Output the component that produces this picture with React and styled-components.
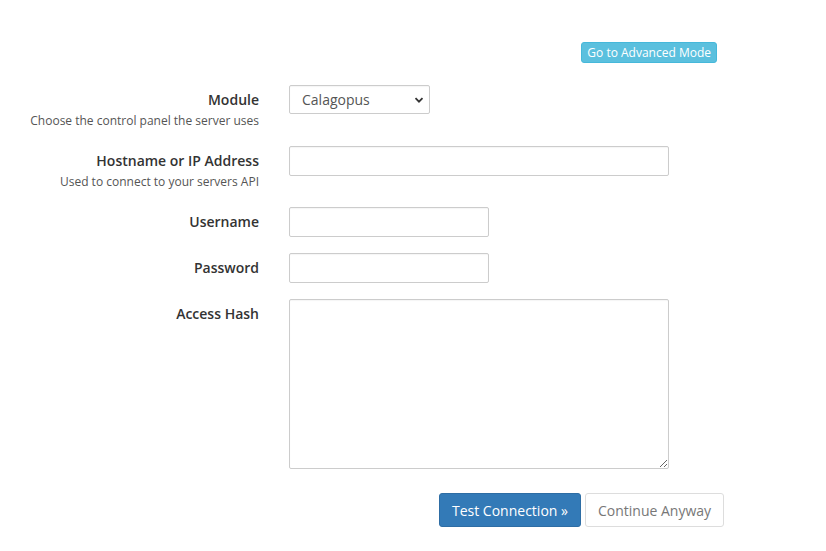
import React from "react";
import styled, { createGlobalStyle } from "styled-components";

const GlobalStyle = createGlobalStyle`
  html, body { margin: 0; padding: 0; background: #fff; }
  body {
    font-family: "Open Sans", "Liberation Sans", Arial, sans-serif;
    color: #333;
    font-size: 14px;
  }
  * { box-sizing: border-box; }
`;

const Page = styled.div`
  width: 826px;
  min-height: 551px;
  padding-top: 42px;
`;

const TopBar = styled.div`
  display: flex;
  justify-content: flex-end;
  padding-right: 109px;
`;

const InfoButton = styled.button`
  font-family: inherit;
  font-size: 12px;
  line-height: 18px;
  height: 21px;
  padding: 0 5px;
  color: #fff;
  background: #5bc0de;
  border: 1px solid #46b8da;
  border-radius: 3px;
  cursor: pointer;
`;

const Form = styled.form`
  display: flex;
  flex-direction: column;
  gap: 16px;
  margin-top: 22px;
`;

const Row = styled.div`
  display: grid;
  grid-template-columns: 259px 1fr;
  column-gap: 30px;
  align-items: start;
`;

const LabelCell = styled.div`
  text-align: right;
  padding-top: ${(p) => p.$pad ?? 5}px;
`;

const Label = styled.label`
  display: block;
  font-weight: 600;
  font-size: 14px;
  line-height: 20px;
  color: #333;
`;

const Help = styled.div`
  margin-top: 2px;
  font-size: 12px;
  line-height: 18px;
  color: #555;
`;

const fieldBase = `
  font-family: inherit;
  font-size: 14px;
  color: #555;
  background: #fff;
  border: 1px solid #ccc;
  border-radius: 2px;
  box-shadow: inset 0 1px 1px rgba(0,0,0,0.04);
  outline: none;
`;

const Select = styled.select`
  ${fieldBase}
  appearance: none;
  width: 141px;
  height: 29px;
  padding: 0 28px 0 12px;
  background-image: url("data:image/svg+xml;utf8,<svg xmlns='http://www.w3.org/2000/svg' width='10' height='8' viewBox='0 0 10 8'><path d='M1.5 2.2 5 5.7 8.5 2.2' fill='none' stroke='%23333' stroke-width='1.8'/></svg>");
  background-repeat: no-repeat;
  background-position: right 5px center;
`;

const Input = styled.input`
  ${fieldBase}
  width: ${(p) => p.$w}px;
  height: 30px;
  padding: 4px 10px;
`;

const TextArea = styled.textarea`
  ${fieldBase}
  display: block;
  width: 380px;
  height: 170px;
  padding: 6px 10px;
`;

const Actions = styled.div`
  display: flex;
  gap: 4px;
  margin-top: 24px;
  padding-left: 439px;
`;

const Button = styled.button`
  font-family: inherit;
  font-size: 14px;
  height: 34px;
  padding: 0 12px;
  border-radius: 3px;
  cursor: pointer;
  color: ${(p) => (p.$primary ? "#fff" : "#777")};
  background: ${(p) => (p.$primary ? "#337ab7" : "#fff")};
  border: 1px solid ${(p) => (p.$primary ? "#2e6da4" : "#ddd")};
`;

export default function App() {
  return (
    <Page>
      <GlobalStyle />
      <TopBar>
        <InfoButton type="button">Go to Advanced Mode</InfoButton>
      </TopBar>
      <Form onSubmit={(e) => e.preventDefault()}>
        <Row>
          <LabelCell $pad={5}>
            <Label>Module</Label>
            <Help>Choose the control panel the server uses</Help>
          </LabelCell>
          <Select defaultValue="calagopus">
            <option value="calagopus">Calagopus</option>
          </Select>
        </Row>
        <Row>
          <LabelCell>
            <Label>Hostname or IP Address</Label>
            <Help>Used to connect to your servers API</Help>
          </LabelCell>
          <Input $w={380} type="text" />
        </Row>
        <Row>
          <LabelCell>
            <Label>Username</Label>
          </LabelCell>
          <Input $w={200} type="text" />
        </Row>
        <Row>
          <LabelCell>
            <Label>Password</Label>
          </LabelCell>
          <Input $w={200} type="password" />
        </Row>
        <Row>
          <LabelCell>
            <Label>Access Hash</Label>
          </LabelCell>
          <TextArea />
        </Row>
      </Form>
      <Actions>
        <Button $primary type="button">Test Connection »</Button>
        <Button type="button">Continue Anyway</Button>
      </Actions>
    </Page>
  );
}
